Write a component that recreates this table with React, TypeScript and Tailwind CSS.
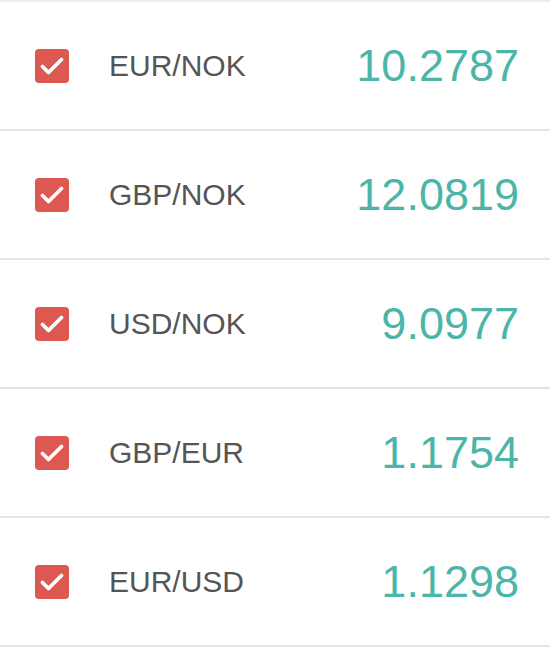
import React from 'react';

interface Rate {
  pair: string;
  value: string;
}

const rates: Rate[] = [
  { pair: 'EUR/NOK', value: '10.2787' },
  { pair: 'GBP/NOK', value: '12.0819' },
  { pair: 'USD/NOK', value: '9.0977' },
  { pair: 'GBP/EUR', value: '1.1754' },
  { pair: 'EUR/USD', value: '1.1298' },
];

const CheckBox: React.FC = () => (
  <span className="flex h-[34px] w-[34px] shrink-0 rounded-[4px] bg-[#dc5850]">
    <svg width="34" height="34" viewBox="0 0 34 34" fill="none">
      <path d="M7.5 17.5 L13.5 23.5 L26.5 10.5" stroke="#fff" strokeWidth="3.8" strokeLinecap="round" strokeLinejoin="round" />
    </svg>
  </span>
);

const RateRow: React.FC<Rate> = ({ pair, value }) => (
  <div className="flex h-[129px] items-center border-b-2 border-[#e4e4e4] pl-[35px] pr-[31px]">
    <CheckBox />
    <span className="ml-[40px] text-[30px] leading-none text-[#555555]">{pair}</span>
    <span className="ml-auto text-[45px] leading-none text-[#4cb5a9]">{value}</span>
  </div>
);

export default function App() {
  return (
    <div className="min-h-[650px] w-[550px] border-t-2 border-[#eeeeee] bg-white [font-family:'Liberation_Sans',Arial,sans-serif]">
      {rates.map((r) => (
        <RateRow key={r.pair} {...r} />
      ))}
    </div>
  );
}
